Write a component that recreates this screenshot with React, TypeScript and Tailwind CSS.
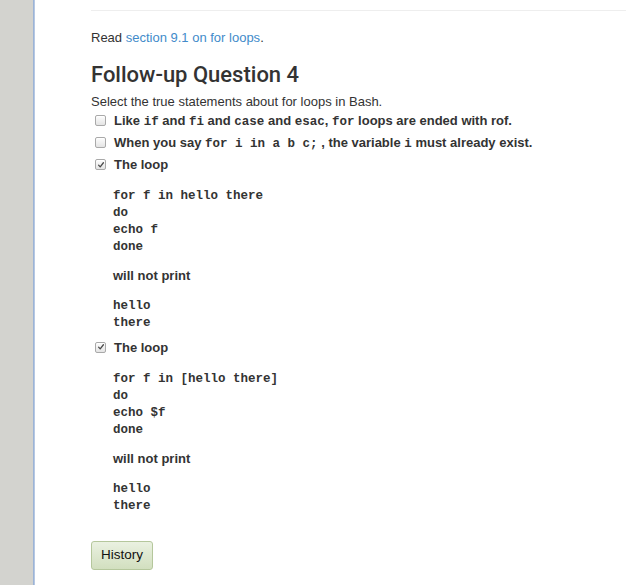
import React from "react";

const sans = { fontFamily: '"Liberation Sans", Arial, sans-serif' };
const mono = { fontFamily: '"Liberation Mono", "Courier New", monospace' };

const Box: React.FC<{ checked?: boolean }> = ({ checked }) => (
  <span className="relative mt-[3px] flex h-[11px] w-[11px] shrink-0 items-center justify-center rounded-[2px] border border-[#a9a9a9] bg-gradient-to-b from-[#fdfdfd] to-[#e4e4e4] shadow-[inset_0_1px_0_#fff]">
    {checked && (
      <svg viewBox="0 0 10 10" className="h-[8px] w-[8px]">
        <path d="M2 5.2 L4 7.4 L8 2.2" fill="none" stroke="#4a4a4a" strokeWidth="1.6" strokeLinecap="round" strokeLinejoin="round" />
      </svg>
    )}
  </span>
);

const C: React.FC<{ children: React.ReactNode }> = ({ children }) => (
  <code className="font-bold text-[12.5px]" style={mono}>
    {children}
  </code>
);

const Code: React.FC<{ lines: string[] }> = ({ lines }) => (
  <pre className="text-[12.5px] font-bold leading-[17px] text-[#333]" style={mono}>
    {lines.join("\n")}
  </pre>
);

const Row: React.FC<{ checked?: boolean; children: React.ReactNode }> = ({ checked, children }) => (
  <div className="flex h-[18px] items-start gap-[8px] pl-[4px] leading-[18px] font-bold">
    <Box checked={checked} />
    <span>{children}</span>
  </div>
);

const LoopBody: React.FC<{ code: string[] }> = ({ code }) => (
  <div className="pl-[22px]">
    <div className="pt-[14px]">
      <Code lines={code} />
    </div>
    <div className="pt-[11px] font-bold leading-[18px]">will not print</div>
    <div className="pt-[13px]">
      <Code lines={["hello", "there"]} />
    </div>
  </div>
);

export default function App() {
  return (
    <div className="flex min-h-[585px] w-[626px] bg-white text-[13px] text-[#333]" style={sans}>
      <div className="w-[33px] shrink-0 bg-[#d3d3cf]" />
      <div className="w-[2px] shrink-0 bg-gradient-to-r from-[#8fa9d0] to-[#c3d2e8]" />
      <main className="flex-1 pl-[56px] pt-[10px]">
        <div className="border-t border-[#eeeeee]" />
        <p className="mt-[17px] leading-[20px]">
          Read <span className="text-[#428bca]">section 9.1 on for loops</span>.
        </p>
        <h3
          className="mt-[14px] text-[22px] font-medium leading-[26px] text-[#333]"
          style={{ fontFamily: 'Roboto, "Liberation Sans", Arial, sans-serif' }}
        >
          Follow-up Question 4
        </h3>
        <p className="mt-[5px] leading-[18px]">Select the true statements about for loops in Bash.</p>
        <div className="mt-[1px] flex flex-col gap-[4px]">
          <Row>
            Like <C>if</C> and <C>fi</C> and <C>case</C> and <C>esac</C>, <C>for</C> loops are ended with rof.
          </Row>
          <Row>
            When you say <C>for i in a b c;</C> , the variable <C>i</C> must already exist.
          </Row>
          <div>
            <Row checked>The loop</Row>
            <LoopBody code={["for f in hello there", "do", "echo f", "done"]} />
          </div>
          <div className="pt-[2.5px]">
            <Row checked>The loop</Row>
            <LoopBody code={["for f in [hello there]", "do", "echo $f", "done"]} />
          </div>
        </div>
        <button className="mt-[26px] h-[29px] w-[62px] rounded-[3px] border border-[#b5c79c] bg-gradient-to-b from-[#eaf1e1] to-[#d2dfbf] text-[13.5px] text-[#111]">
          History
        </button>
      </main>
    </div>
  );
}
